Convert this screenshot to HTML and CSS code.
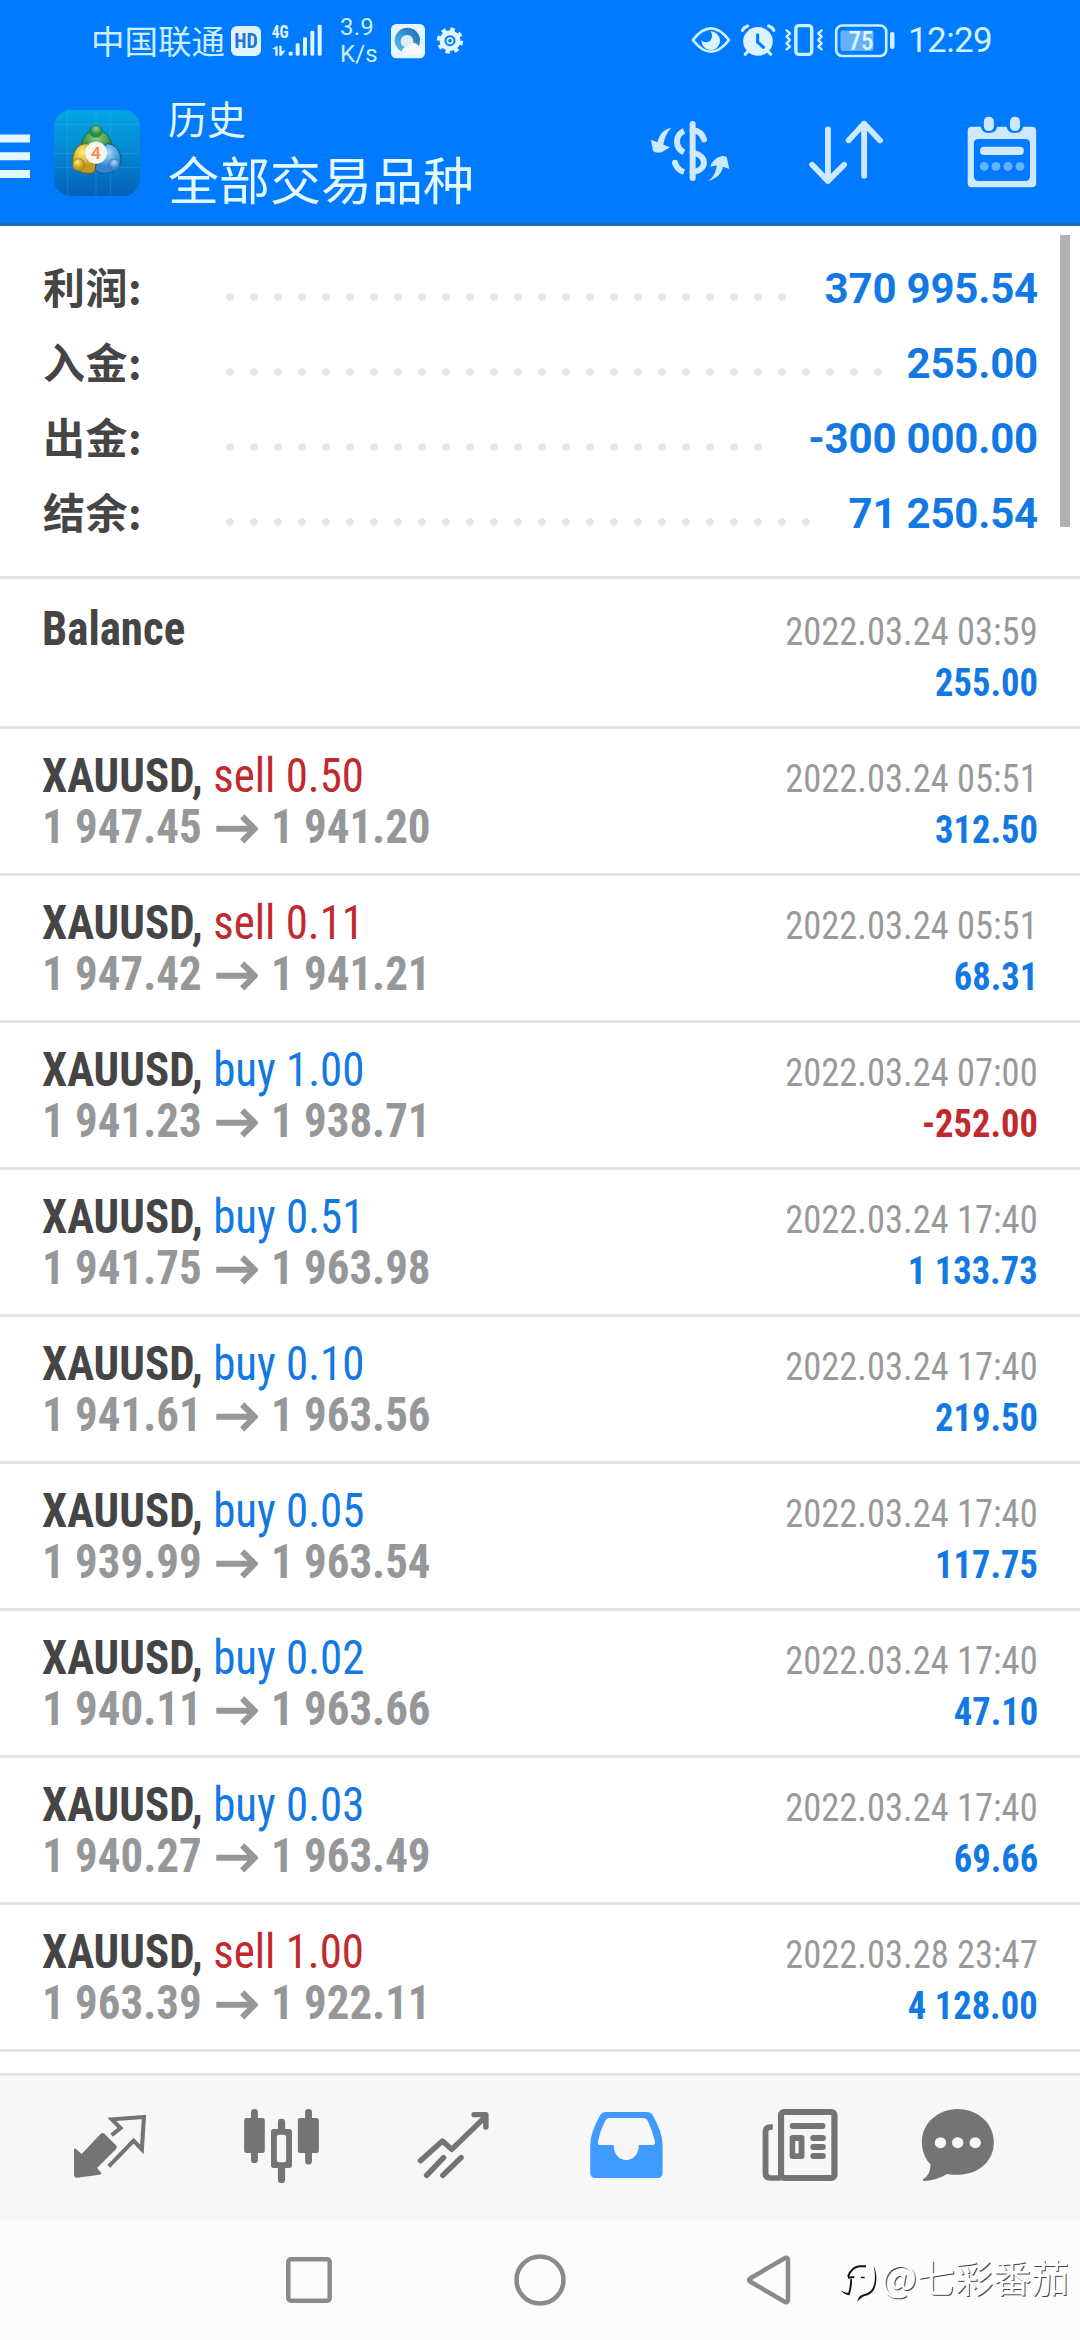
FILE: index.html
```html
<!DOCTYPE html>
<html lang="zh-CN">
<head>
<meta charset="utf-8">
<title>历史</title>
<link rel="stylesheet" href="styles.css">
</head>
<body>
<div class="screen">
  <header class="header">
    <div class="status">
      <div class="status-left">
        <span class="carrier">中国联通</span>
        <span class="hd">HD</span>
        <svg class="signal" width="52" height="42" viewBox="138 15 156 126">
          <g fill="#dff6ff">
            <text x="140" y="69" class="net" textLength="51" lengthAdjust="spacingAndGlyphs">4G</text>
            <path d="M141 102l13-8h4v28h-7v-19zM163 92h7v16l12-2-12 16h-7z"/>
            <rect x="191" y="110" width="12" height="12" rx="4"/><rect x="212" y="85" width="12" height="37" rx="4"/><rect x="234" y="67" width="12" height="55" rx="4"/><rect x="256" y="47" width="12" height="75" rx="4"/><rect x="278" y="29" width="12" height="93" rx="4"/>
          </g>
        </svg>
        <span class="speed">3.9<br>K/s</span>
        <svg class="browser" width="34" height="42" viewBox="498 15 102 126">
          <defs><linearGradient id="ring" x1="0" y1="1" x2="1" y2="0"><stop offset="0" stop-color="#5bc2e8"/><stop offset=".5" stop-color="#3798d8"/><stop offset="1" stop-color="#1664b4"/></linearGradient></defs>
          <rect x="498" y="27" width="102" height="103" rx="16" fill="#e6f5fd"/>
          <circle cx="547" cy="76" r="38" fill="url(#ring)"/>
          <circle cx="546" cy="79" r="19" fill="#e0edf8"/>
          <path d="M543 121c-12-1-17-14-8-21 4-5 12-5 15-2 4-12 12-16 21-13 5 2 8 5 9 9 10 1 14 9 12 18-2 6-8 9-12 9z" fill="#f3fbff"/>
        </svg>
        <svg class="gear" width="28" height="42" viewBox="633 15 84 126">
          <circle cx="675" cy="77" r="24" fill="none" stroke="#dff6ff" stroke-width="15"/>
          <circle cx="675" cy="77" r="34" fill="none" stroke="#dff6ff" stroke-width="11" stroke-dasharray="13.35 13.35"/>
          <circle cx="675" cy="77" r="8" fill="none" stroke="#dff6ff" stroke-width="5"/>
        </svg>
      </div>
      <div class="status-right">
        <svg width="42" height="42" viewBox="435.6 60 122 126" preserveAspectRatio="none">
          <path d="M444 120Q496 50 549 120Q496 190 444 120z" fill="none" stroke="#cdf0ff" stroke-width="8" stroke-linejoin="round"/>
          <path d="M495 94a27 28 0 1 1-26 26c6 9 20 9 27 0 5-8 5-19-1-26z" fill="#dcf3ff"/>
        </svg>
        <svg width="37" height="42" viewBox="580.8 60 107.4 126" preserveAspectRatio="none">
          <circle cx="633" cy="124" r="43" fill="#dcf3ff"/>
          <path d="M588 91q4-9 15-13M679 91q-4-9-15-13M603 155l-7 8M663 155l7 8" stroke="#dcf3ff" stroke-width="9" stroke-linecap="round" fill="none"/>
          <path d="M632 104v22l17 16" stroke="#007aff" stroke-width="9" stroke-linecap="round" fill="none"/>
        </svg>
        <svg width="42" height="42" viewBox="705.7 60 122 126" preserveAspectRatio="none">
          <rect x="743" y="77" width="46" height="86" rx="9" fill="none" stroke="#cdf0ff" stroke-width="10"/>
          <path d="M716 91l10 9-10 10 10 10-10 10 10 10-10 8M818 91l-10 9 10 10-10 10 10 10-10 10 10 8" fill="none" stroke="#cdf0ff" stroke-width="7" stroke-linecap="round" stroke-linejoin="round"/>
        </svg>
        <svg class="battery" width="63" height="42" viewBox="0 0 63 42">
          <rect x="3.2" y="5.5" width="50" height="30.500" rx="6" fill="none" stroke="#cdf0ff" stroke-width="2.600"/>
          <rect x="7.500" y="10.500" width="33" height="20.500" rx="2" fill="#66b0ff"/>
          <rect x="57" y="12" width="4.500" height="17" rx="2" fill="#cdf0ff"/>
          <text x="28" y="29.500" text-anchor="middle" class="pct">75</text>
        </svg>
        <span class="clock">12:29</span>
      </div>
    </div>
    <div class="appbar">
      <svg width="30" height="44" viewBox="0 0 30 44"><path d="M0 4.500h30M0 22.200h30M0 40h30" stroke="#e6f8ff" stroke-width="8"/></svg>
      <svg class="logo" width="86" height="86" viewBox="42 30 258 258">
        <defs>
          <linearGradient id="sky" x1="0" y1="0" x2="0" y2="1"><stop offset="0" stop-color="#02a5e2"/><stop offset=".45" stop-color="#058bd3"/><stop offset="1" stop-color="#0460b8"/></linearGradient>
          <radialGradient id="gr" cx=".5" cy=".3"><stop offset="0" stop-color="#8bd086"/><stop offset="1" stop-color="#2b8741"/></radialGradient>
          <radialGradient id="ye" cx=".4" cy=".3"><stop offset="0" stop-color="#fff07a"/><stop offset="1" stop-color="#c29a1c"/></radialGradient>
          <radialGradient id="bl" cx=".5" cy=".3"><stop offset="0" stop-color="#a5dcfa"/><stop offset="1" stop-color="#3485cc"/></radialGradient>
        </defs>
        <rect x="42" y="30" width="258" height="258" rx="50" fill="url(#sky)"/>
        <path d="M42 73h258M42 160h258M42 202h258M82 30v258M168 30v258M211 30v258" stroke="#6fc6f0" stroke-opacity=".3" stroke-width="2"/>
        <path d="M124 150C120 115 140 92 169 91c31 1 50 26 46 59l-12 20-66-8z" fill="url(#gr)" stroke="#1d6b3a" stroke-width="3"/>
        <path d="M142 131c-25-2-44 20-44 50 2 26 24 43 58 38l14-10-6-60z" fill="url(#ye)" stroke="#75641b" stroke-width="3"/>
        <path d="M201 131c25 0 44 24 42 52-5 26-30 42-62 36l-16-9 10-50z" fill="url(#bl)" stroke="#15528e" stroke-width="3"/>
        <circle cx="168" cy="94" r="18" fill="url(#gr)" stroke="#27733b" stroke-width="2"/>
        <circle cx="116" cy="194" r="18" fill="url(#ye)" stroke="#89731f" stroke-width="2"/>
        <circle cx="222" cy="194" r="17" fill="url(#bl)" stroke="#266eac" stroke-width="2"/>
        <circle cx="168" cy="158" r="33" fill="#f5f5f2"/>
        <text x="168" y="178" text-anchor="middle" class="four">4</text>
      </svg>
      <div class="titles"><h1>历史</h1><h2>全部交易品种</h2></div>
      <div class="actions">
        <svg width="110" height="90" viewBox="0 0 330 270">
          <g fill="none" stroke="#cde8ff" stroke-width="18">
            <path d="M158 57v162" stroke-linecap="round"/>
            <path d="M132 78c-28 12-28 50 0 64M105 173q5 21 27 28"/>
            <path d="M105 173l0 0M158 75q27 4 34 28M158 143c45 9 45 52 0 58" stroke-linecap="round"/>
          </g>
          <path d="M94 68C72 72 58 88 52 112L33 104l6 34q8 8 26 4l25-15-20-8c3-18 9-35 24-51zM205 228c19-14 24-33 25-47l-19 4q8-27 37-32 11 0 13 7l7 32-19-7c-3 18-18 35-44 43z" fill="#cde8ff"/>
        </svg>
        <svg width="90" height="90" viewBox="755 315 261 270" preserveAspectRatio="none">
          <path d="M836 388v155M790 494l46 49 47-49M941 527V371M896 421l45-50 46 50" fill="none" stroke="#cde8ff" stroke-width="17" stroke-linecap="round" stroke-linejoin="round"/>
        </svg>
        <svg width="84" height="90" viewBox="1219.7 315 244 270" preserveAspectRatio="none">
          <path fill-rule="evenodd" fill="#cde8ff" d="M1254 380h26q4 19 24 19t24-19h27q4 19 24 19t24-19h26q12 0 12 12v158q0 12-12 12h-175q-12 0-12-12V392q0-12 12-12zM1274 417q-14 0-14 14v98q0 14 14 14h135q14 0 14-14v-98q0-14-14-14z"/>
          <rect x="1289" y="350" width="29" height="43" rx="14" fill="#cde8ff"/><rect x="1365" y="350" width="29" height="43" rx="14" fill="#cde8ff"/>
          <rect x="1278" y="440" width="127" height="25" rx="11" fill="#cde8ff"/>
          <g fill="#66b1ff"><circle cx="1290" cy="499" r="13"/><circle cx="1324" cy="499" r="13"/><circle cx="1359" cy="499" r="13"/><circle cx="1394" cy="499" r="13"/></g>
        </svg>
      </div>
    </div>
  </header>

  <main class="content">
    <section class="summary">
      <div class="total"><span class="label">利润:</span><i class="dots" style="width:576px"></i><b>370 995.54</b></div>
      <div class="total"><span class="label">入金:</span><i class="dots" style="width:672px"></i><b>255.00</b></div>
      <div class="total"><span class="label">出金:</span><i class="dots" style="width:552px"></i><b>-300 000.00</b></div>
      <div class="total"><span class="label">结余:</span><i class="dots" style="width:600px"></i><b>71 250.54</b></div>
      <div class="scrollbar"></div>
    </section>
    <svg class="defs"><symbol id="arrow" viewBox="0 0 42 30" preserveAspectRatio="none"><path d="M0 14.800h38M26 2.500l12.500 12.300L26 27.300" fill="none" stroke="currentColor" stroke-width="6"/></symbol></svg>
    <ul class="deals">
      <li class="deal deal-balance"><div class="line"><strong>Balance</strong><time>2022.03.24 03:59</time></div><div class="line"><span>&nbsp;</span><b class="up">255.00</b></div></li>
      <li class="deal"><div class="line"><span><strong>XAUUSD,</strong> <em class="sell">sell 0.50</em></span><time>2022.03.24 05:51</time></div><div class="line"><span class="price">1 947.45<svg class="to"><use href="#arrow"/></svg>1 941.20</span><b class="up">312.50</b></div></li>
      <li class="deal"><div class="line"><span><strong>XAUUSD,</strong> <em class="sell">sell 0.11</em></span><time>2022.03.24 05:51</time></div><div class="line"><span class="price">1 947.42<svg class="to"><use href="#arrow"/></svg>1 941.21</span><b class="up">68.31</b></div></li>
      <li class="deal"><div class="line"><span><strong>XAUUSD,</strong> <em class="buy">buy 1.00</em></span><time>2022.03.24 07:00</time></div><div class="line"><span class="price">1 941.23<svg class="to"><use href="#arrow"/></svg>1 938.71</span><b class="down">-252.00</b></div></li>
      <li class="deal"><div class="line"><span><strong>XAUUSD,</strong> <em class="buy">buy 0.51</em></span><time>2022.03.24 17:40</time></div><div class="line"><span class="price">1 941.75<svg class="to"><use href="#arrow"/></svg>1 963.98</span><b class="up">1 133.73</b></div></li>
      <li class="deal"><div class="line"><span><strong>XAUUSD,</strong> <em class="buy">buy 0.10</em></span><time>2022.03.24 17:40</time></div><div class="line"><span class="price">1 941.61<svg class="to"><use href="#arrow"/></svg>1 963.56</span><b class="up">219.50</b></div></li>
      <li class="deal"><div class="line"><span><strong>XAUUSD,</strong> <em class="buy">buy 0.05</em></span><time>2022.03.24 17:40</time></div><div class="line"><span class="price">1 939.99<svg class="to"><use href="#arrow"/></svg>1 963.54</span><b class="up">117.75</b></div></li>
      <li class="deal"><div class="line"><span><strong>XAUUSD,</strong> <em class="buy">buy 0.02</em></span><time>2022.03.24 17:40</time></div><div class="line"><span class="price">1 940.11<svg class="to"><use href="#arrow"/></svg>1 963.66</span><b class="up">47.10</b></div></li>
      <li class="deal"><div class="line"><span><strong>XAUUSD,</strong> <em class="buy">buy 0.03</em></span><time>2022.03.24 17:40</time></div><div class="line"><span class="price">1 940.27<svg class="to"><use href="#arrow"/></svg>1 963.49</span><b class="up">69.66</b></div></li>
      <li class="deal"><div class="line"><span><strong>XAUUSD,</strong> <em class="sell">sell 1.00</em></span><time>2022.03.28 23:47</time></div><div class="line"><span class="price">1 963.39<svg class="to"><use href="#arrow"/></svg>1 922.11</span><b class="up">4 128.00</b></div></li>
    </ul>
  </main>

  <nav class="tabs">
    <svg viewBox="69.7 108 499.5 432" preserveAspectRatio="none">
      <path d="M215 326q3-2 6 1l16 15 55-60q6-6 12 0l33 34q5 5 0 11l-55 57 13 16q0 3-6 4l-65 9q-9 1-9-9z" fill="#747474"/>
      <path d="M324 286l26-22-25-26 93-7-6 97-24-26-72 77" fill="none" stroke="#747474" stroke-width="12"/>
    </svg>
    <svg viewBox="569.2 108 499.5 432" preserveAspectRatio="none">
      <g fill="#747474"><rect x="709" y="234" width="60" height="105" rx="7"/><rect x="729" y="207" width="20" height="162" rx="10"/><rect x="865" y="234" width="61" height="105" rx="7"/><rect x="886" y="207" width="20" height="167" rx="10"/><rect x="787" y="267" width="61" height="117" rx="8"/><rect x="807" y="236" width="21" height="193" rx="10"/></g>
      <rect x="804" y="284" width="27" height="83" rx="7" fill="#f7f7f7"/>
    </svg>
    <svg viewBox="1068.7 108 499.5 432" preserveAspectRatio="none">
      <path d="M1221 362l64-59 27 25 98-98M1239 406l49-53M1286 406l53-53M1377 224h34v37" fill="none" stroke="#747474" stroke-width="16" stroke-linecap="round" stroke-linejoin="round"/>
      <path d="M1390 224h21v22z" fill="#747474"/>
    </svg>
    <svg viewBox="0 108 499.5 432" preserveAspectRatio="none">
      <path fill-rule="evenodd" fill="#419bff" d="M192 216h118q12 0 17 9 29 52 29 90v83q0 16-16 16H162q-16 0-16-16v-83q0-38 29-90 5-9 17-9zM203 234q-10 0-14 9-15 30-21 62-1 10 9 10h37c0 60 73 60 73 0h38q10 0 9-10-7-32-21-62-4-9-14-9z"/>
    </svg>
    <svg viewBox="499.5 108 499.5 432" preserveAspectRatio="none">
      <path d="M676 261h-7q-14 0-14 14v125q0 14 14 14h30" fill="none" stroke="#747474" stroke-width="17"/>
      <rect x="700" y="216" width="155" height="198" rx="9" fill="none" stroke="#747474" stroke-width="18"/>
      <g fill="#747474"><rect x="725" y="249" width="104" height="18" rx="9"/><rect x="785" y="285" width="45" height="18" rx="9"/><rect x="785" y="312" width="45" height="18" rx="9"/><rect x="785" y="339" width="45" height="18" rx="9"/><rect x="725" y="285" width="43" height="72" rx="8"/></g>
      <rect x="741" y="303" width="10" height="37" fill="#f7f7f7"/>
    </svg>
    <svg viewBox="999 108 499.5 432" preserveAspectRatio="none">
      <path d="M1213 207c58 0 105 43 105 99 0 72-66 109-135 96-24 14-47 21-69 21q-5-2-2-5c18-10 22-28 22-45-17-19-25-41-25-67 0-56 47-99 104-99z" fill="#747474"/>
      <g fill="#f7f7f7"><circle cx="1163" cy="308" r="16.500"/><circle cx="1213" cy="308" r="16.500"/><circle cx="1264" cy="308" r="16.500"/></g>
    </svg>
  </nav>

  <footer class="sysnav">
    <svg class="recent" width="46" height="46" viewBox="0 0 46 46"><rect x="2.300" y="2.300" width="41.400" height="41.400" rx="2.500"/></svg>
    <svg class="home" width="52" height="52" viewBox="0 0 52 52"><circle cx="26" cy="26" r="23.500"/></svg>
    <svg class="back" width="45" height="52" viewBox="0 0 45 52"><path d="M39 4q3-1 3 2v40q0 3-3 2L4 27.500q-2-1.500 0-3z"/></svg>
    <div class="mark">
      <svg width="36" height="40" viewBox="33 60 108 120"><path d="M54 104l19-2M54 101c7-18 16-30 36-31h18" fill="none" stroke="#111" stroke-width="6"/><path d="M66 108c1 22-4 34-7 49-12-1-20-6-26-15 8 6 15 8 22 7 4-14 5-27 6-41zM93 101h11v5h-11zM131 68c11 22 11 56-1 75-9 13-22 14-31 18-7 3-11 9-17 15 1-9 6-18 15-21 13-4 24-6 31-20 9-18 8-45 3-67z" fill="#111"/></svg>
      <span>@七彩番茄</span>
    </div>
  </footer>
</div>
</body>
</html>
```
FILE: styles.css
```css
* { box-sizing: border-box; margin: 0; padding: 0; }
body { width: 1080px; background: #fff; font-family: Roboto, "Noto Sans CJK SC", sans-serif; }
svg { display: block; flex: none; }
.screen { width: 1080px; height: 2340px; display: flex; flex-direction: column; overflow: hidden; }

.header { height: 226px; background: #007aff; border-bottom: 3px solid #1a6cbc; color: #e3f8ff; }
.status { height: 82px; display: flex; justify-content: space-between; align-items: center; padding: 0 88px 0 91px; }
.status-left, .status-right { display: flex; align-items: center; }
.carrier { font: 33.500px/42px "Noto Sans CJK SC", sans-serif; width: 140px; margin-top: -2px; white-space: nowrap; color: #c9efff; }
.hd { width: 30px; height: 30px; border-radius: 6px; background: #dff3ff; color: #2277cf; font: 700 20px/30px Roboto, sans-serif; font-stretch: 75%; text-align: center; }
.signal { margin-left: 10px; }
.net { font: 700 54px "Roboto Condensed", sans-serif; }
.speed { margin-left: 17px; width: 51px; font-size: 24px; line-height: 27px; color: #c9efff; letter-spacing: .2px; }
.gear { margin-left: 11px; }
.status-right svg:nth-child(2) { margin-left: 8px; }
.status-right svg:nth-child(3) { margin-left: 6px; }
.status-right .battery { margin-left: 8px; }
.pct { font: 500 25px "Roboto Condensed", sans-serif; fill: #dff6ff; }
.clock { margin-left: 12px; font-size: 35px; line-height: 42px; width: 84px; white-space: nowrap; letter-spacing: -.6px; color: #d2f2ff; }

.appbar { height: 141px; display: flex; align-items: center; }
.appbar > svg:first-child { margin-top: 6px; }
.logo { margin: 1px 0 0 24px; }
.four { font: 700 52px Roboto, sans-serif; fill: #f0914a; }
.titles { margin: -9px 0 0 28px; width: 472px; flex: none; font-family: "Noto Sans CJK SC", sans-serif; }
.titles h1 { font-size: 39px; font-weight: 400; line-height: 61px; }
.titles h2 { font-size: 51px; font-weight: 400; line-height: 61px; }
.actions { display: flex; align-items: center; margin-top: -5px; }
.actions svg:nth-child(2) { margin-left: 50px; }
.actions svg:nth-child(3) { margin-left: 70px; }

.content { flex: 1; min-height: 0; overflow: hidden; }
.summary { position: relative; height: 353px; padding: 25px 42px 0 43px; border-bottom: 3px solid #e4e4e4; }
.total { height: 75px; display: flex; align-items: center; }
.label { width: 175px; margin-top: -5px; font: 700 42px/60px "Noto Sans CJK SC", sans-serif; letter-spacing: .5px; color: #454545; }
.dots { height: 8px; margin-top: 17px; background: radial-gradient(circle at 12px 4px, #e5e5e5 3.400px, transparent 4.200px) 0 0 / 24px 8px repeat-x; }
.total b { margin-left: auto; font-size: 42px; line-height: 60px; letter-spacing: -.2px; color: #1278e4; }
.scrollbar { position: absolute; right: 10px; top: 9px; width: 10px; height: 292px; background: #b1b1b1; }
.defs { position: absolute; width: 0; height: 0; }

.deals { list-style: none; font-family: "Roboto Condensed", Roboto, sans-serif; font-size: 48px; }
.deal { height: 147px; padding: 21px 42px 0; border-bottom: 3px solid #e4e4e4; }
.deal-balance { height: 150px; padding-top: 24px; }
.line { height: 51px; line-height: 51px; display: flex; justify-content: space-between; align-items: baseline; white-space: nowrap; }
.line > * { transform: scaleX(.936); transform-origin: 0 50%; }
.line > :last-child { transform-origin: 100% 50%; }
.line strong { color: #454545; font-weight: 700; }
.line em { font-style: normal; }
.sell { color: #c02a2e; }
.buy { color: #1278e4; }
.price { color: #969798; font-weight: 700; }
.to { display: inline-block; width: 45px; height: 30px; margin: 0 14px 0 15px; vertical-align: -1px; }
.line time, .line b { font-size: 39px; }
.line time { color: #999; }
.up { color: #1278e4; }
.down { color: #c02a2e; }

.tabs { height: 147px; padding: 0 24px; display: flex; background: #f7f7f7; border-top: 3px solid #e4e4e4; }
.tabs svg { width: 172px; height: 144px; }
.sysnav { height: 120px; display: flex; align-items: center; background: #fcfcfc; padding-left: 286px; }
.sysnav > svg { fill: none; stroke: #8a8a8a; stroke-width: 4.500px; }
.home { margin-left: 182px; }
.back { margin-left: 180px; }
.mark { display: flex; align-items: center; margin-left: 50px; }
.mark svg { margin-top: 6px; }
.mark span { margin: -9px 0 0 4px; font: 38px/50px "Noto Sans CJK SC", sans-serif; color: #fff; white-space: nowrap; text-shadow: 1px 1px 0 #444; }
```
